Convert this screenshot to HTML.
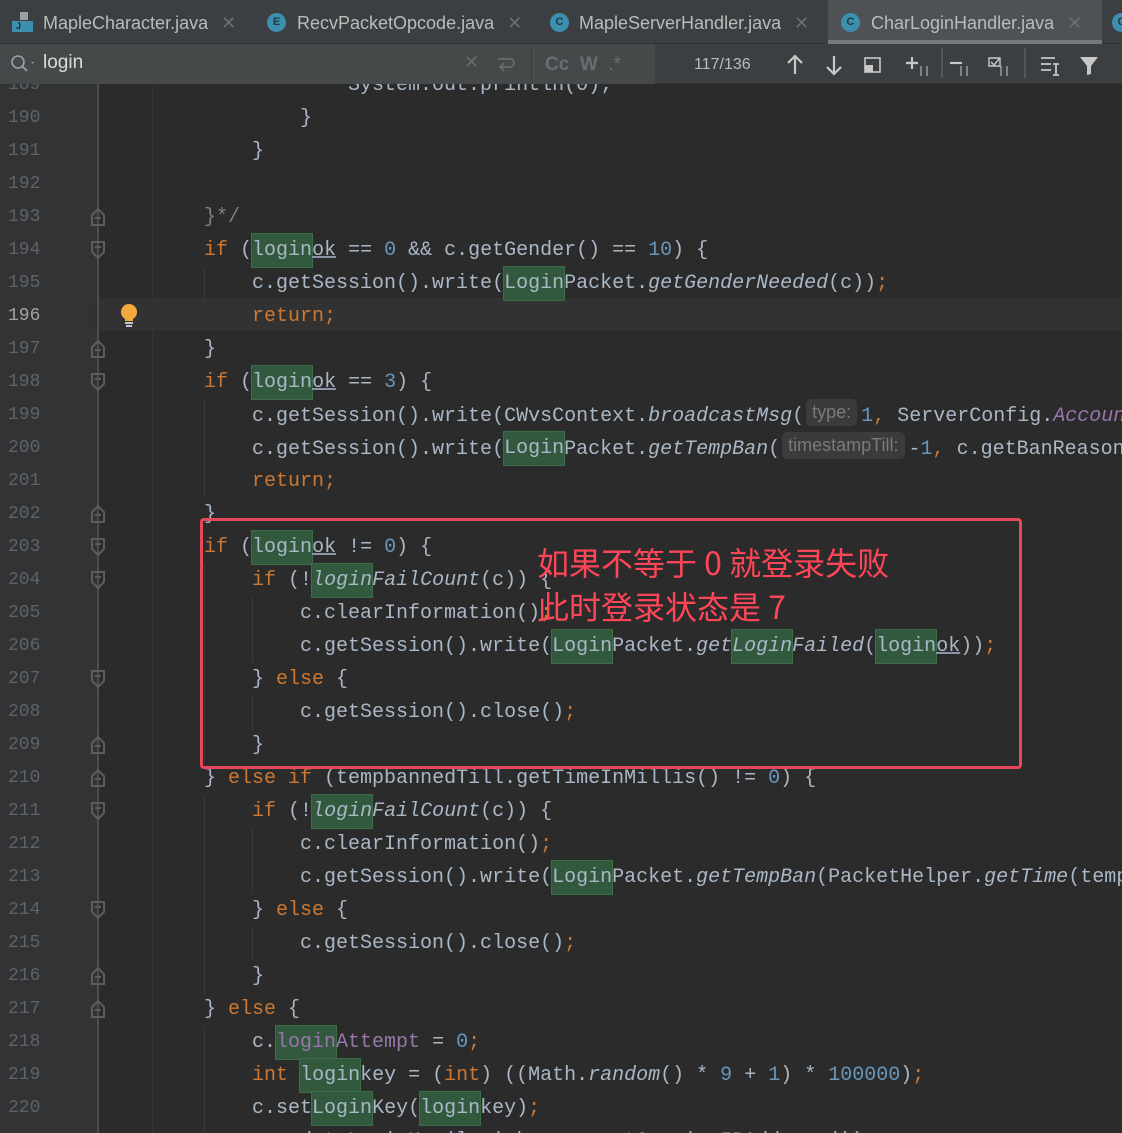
<!DOCTYPE html>
<html><head><meta charset="utf-8"><style>
*{margin:0;padding:0;box-sizing:border-box}
body{width:1122px;height:1133px;overflow:hidden;background:#2b2b2b;position:relative;font-family:"Liberation Mono",monospace}
.tabs{position:absolute;left:0;top:0;width:1122px;height:44px;background:#3c3f41;border-bottom:1px solid #323232}
.tab{position:absolute;top:0;height:44px;font:18px "Liberation Sans",sans-serif;color:#bbbbbb;line-height:46px;white-space:nowrap}
.ic{position:absolute;top:13px;width:19px;height:19px;border-radius:50%;background:#3d8fb0;color:#1f3944;font:bold 11px "Liberation Sans",sans-serif;text-align:center;line-height:19px}
.x{color:#6e6e6e;font-size:18px}
.search{position:absolute;left:0;top:44px;width:1122px;height:40px;background:#3c3f41;border-bottom:1px solid #323232}
.gut{position:absolute;left:0;top:84px;width:98px;height:1049px;background:#313335}
.vl{position:absolute;left:97px;top:84px;width:2px;height:1049px;background:#4b4d4f}
.vl2{position:absolute;left:152px;top:84px;width:1px;height:1049px;background:#333}
.ln{position:absolute;left:8px;width:50px;height:33px;line-height:33px;font-size:18px;color:#606366}
.row{position:absolute;left:108px;height:33px;line-height:33px;font-size:20px;color:#a9b7c6;white-space:pre}
.k{color:#cc7832}.n{color:#6897bb}.i{font-style:italic}.f{color:#9876aa}.c{color:#808080}
.m{background:#32593d;outline:1px solid #3b6e47;display:inline-block;height:33px;vertical-align:top}
.u{text-decoration:underline;text-decoration-color:#8a96a6}
.h{display:inline-block;background:#3b3b3b;color:#7a7a7a;font:18px "Liberation Sans",sans-serif;border-radius:5px;padding:0 6px;height:27px;line-height:27px;vertical-align:3px;margin:0 4px 0 2px}
.guide{position:absolute;width:1px;background:#3a3a3a}
.st{position:absolute;top:0;height:40px;white-space:nowrap}
</style></head><body>
<div class="tabs">
 <div class="tab" style="left:12px"><span style="position:absolute;left:0;top:12px;width:21px;height:20px"><span style="position:absolute;left:8px;top:0;width:8px;height:8px;background:#9aa0a6"></span><span style="position:absolute;left:0;top:9px;width:21px;height:11px;background:#3d8fb0;color:#1b2b33;font:bold 9px sans-serif;padding-left:4px;line-height:11px">J</span></span><span style="margin-left:31px">MapleCharacter.java</span> <span class="x" style="margin-left:8px">✕</span></div>
 <div class="tab" style="left:267px"><span class="ic" style="left:0">E</span><span style="margin-left:30px">RecvPacketOpcode.java</span> <span class="x" style="margin-left:8px">✕</span></div>
 <div class="tab" style="left:550px"><span class="ic" style="left:0">C</span><span style="margin-left:29px">MapleServerHandler.java</span> <span class="x" style="margin-left:8px">✕</span></div>
 <div class="tab" style="left:828px;width:274px;background:#4e5254"><span class="ic" style="left:13px">C</span><span style="margin-left:43px">CharLoginHandler.java</span> <span class="x" style="margin-left:8px">✕</span><div style="position:absolute;left:0;bottom:0;width:274px;height:4px;background:#747a80"></div></div>
 <div class="tab" style="left:1112px"><span class="ic" style="left:0">C</span></div>
</div>
<div class="search">
 <div style="position:absolute;left:0;top:0;width:532px;height:40px;background:#45494a"></div>
 <svg style="position:absolute;left:10px;top:10px" width="26" height="20"><circle cx="8" cy="8" r="6" fill="none" stroke="#9aa0a6" stroke-width="1.6"/><line x1="12" y1="12" x2="17" y2="17" stroke="#9aa0a6" stroke-width="1.8"/><path d="M21 8l3 0-1.5 2z" fill="#9aa0a6"/></svg>
 <div class="st" style="left:43px;font:19px 'Liberation Sans',sans-serif;line-height:38px;color:#dcdcdc">login</div>
 <div class="st" style="left:464px;color:#6b6b6b;font-size:18px;line-height:40px">✕</div>
 <svg style="position:absolute;left:496px;top:12px" width="20" height="18"><path d="M2 3h12a4 4 0 0 1 0 8H5M8 7l-4 4 4 4" fill="none" stroke="#6b6b6b" stroke-width="1.8"/></svg>
 <div style="position:absolute;left:533px;top:0;width:122px;height:40px;background:#45494a;border-left:1px solid #555"></div>
 <div class="st" style="left:545px;font:bold 19px 'Liberation Sans',sans-serif;line-height:42px;color:#6b6e70">Cc&nbsp; W&nbsp; <span style="font-weight:normal">.*</span></div>
 <div class="st" style="left:694px;font:16px 'Liberation Sans',sans-serif;line-height:42px;color:#bbbbbb">117/136</div>
 <svg style="position:absolute;left:784px;top:10px" width="330" height="22" fill="none" stroke="#c8c8c8" stroke-width="2.2">
  <path d="M11 2v18M4 9l7-7 7 7"/><path d="M50 2v18M43 13l7 7 7-7"/>
  <rect x="81" y="4" width="15" height="14" stroke-width="1.6"/><rect x="81" y="11" width="8" height="7" fill="#c8c8c8" stroke="none"/>
  <path d="M128 3v12M122 9h12"/><path d="M137 12v10M143 12v10" stroke-width="1"/>
  <path d="M166 9h12"/><path d="M177 12v10M183 12v10" stroke-width="1"/>
  <path d="M205 4h11v8h-11zM207 8l3 3 6-7" stroke-width="1.4"/><path d="M217 12v10M223 12v10" stroke-width="1"/>
  <path d="M257 4h14M257 10h10M257 16h10M272 10v11M269 10h6M269 21h6" stroke-width="1.8"/>
  <path d="M296 3h18l-7 9v8l-4 1v-9z" fill="#c8c8c8" stroke="none"/>
 </svg>
 <div style="position:absolute;left:941px;top:4px;width:2px;height:30px;background:#555"></div>
 <div style="position:absolute;left:1024px;top:4px;width:2px;height:30px;background:#555"></div>
</div>
<div class="gut"></div>
<div style="position:absolute;left:92px;top:298px;width:1030px;height:33px;background:#323232"></div>
<div class="vl"></div><div class="vl2"></div>
<div style="position:absolute;left:0;top:84px;width:1122px;height:1049px;overflow:hidden">
<div style="position:absolute;left:0;top:-82px;width:1122px;height:1133px">
<div class="guide" style="left:204px;top:265px;height:33px"></div>
<div class="guide" style="left:204px;top:397px;height:99px"></div>
<div class="guide" style="left:204px;top:562px;height:198px"></div>
<div class="guide" style="left:252px;top:595px;height:66px"></div>
<div class="guide" style="left:252px;top:694px;height:33px"></div>
<div class="guide" style="left:204px;top:793px;height:198px"></div>
<div class="guide" style="left:252px;top:826px;height:66px"></div>
<div class="guide" style="left:252px;top:925px;height:33px"></div>
<div class="guide" style="left:204px;top:1024px;height:109px"></div>

<div class="ln" style="top:67px">189</div><div class="row" style="top:67px">                    System.out.println(0);</div>
<div class="ln" style="top:100px">190</div><div class="row" style="top:100px">                }</div>
<div class="ln" style="top:133px">191</div><div class="row" style="top:133px">            }</div>
<div class="ln" style="top:166px">192</div>
<div class="ln" style="top:199px">193</div><div class="row" style="top:199px">        <span class="c">}*/</span></div>
<div class="ln" style="top:232px">194</div><div class="row" style="top:232px">        <span class="k">if</span> (<span class="u"><span class="m">login</span>ok</span> == <span class="n">0</span> &amp;&amp; c.getGender() == <span class="n">10</span>) {</div>
<div class="ln" style="top:265px">195</div><div class="row" style="top:265px">            c.getSession().write(<span class="m">Login</span>Packet.<span class="i">getGenderNeeded</span>(c))<span class="k">;</span></div>
<div class="ln" style="top:298px;color:#a4a3a3">196</div><div class="row" style="top:298px">            <span class="k">return;</span></div>
<div class="ln" style="top:331px">197</div><div class="row" style="top:331px">        }</div>
<div class="ln" style="top:364px">198</div><div class="row" style="top:364px">        <span class="k">if</span> (<span class="u"><span class="m">login</span>ok</span> == <span class="n">3</span>) {</div>
<div class="ln" style="top:397px">199</div><div class="row" style="top:397px">            c.getSession().write(CWvsContext.<span class="i">broadcastMsg</span>(<span class="h">type:</span><span class="n">1</span><span class="k">,</span> ServerConfig.<span class="f i">AccountLimit</span></div>
<div class="ln" style="top:430px">200</div><div class="row" style="top:430px">            c.getSession().write(<span class="m">Login</span>Packet.<span class="i">getTempBan</span>(<span class="h">timestampTill:</span>-<span class="n">1</span><span class="k">,</span> c.getBanReason</div>
<div class="ln" style="top:463px">201</div><div class="row" style="top:463px">            <span class="k">return;</span></div>
<div class="ln" style="top:496px">202</div><div class="row" style="top:496px">        }</div>
<div class="ln" style="top:529px">203</div><div class="row" style="top:529px">        <span class="k">if</span> (<span class="u"><span class="m">login</span>ok</span> != <span class="n">0</span>) {</div>
<div class="ln" style="top:562px">204</div><div class="row" style="top:562px">            <span class="k">if</span> (!<span class="i"><span class="m">login</span>FailCount</span>(c)) {</div>
<div class="ln" style="top:595px">205</div><div class="row" style="top:595px">                c.clearInformation()<span class="k">;</span></div>
<div class="ln" style="top:628px">206</div><div class="row" style="top:628px">                c.getSession().write(<span class="m">Login</span>Packet.<span class="i">get<span class="m">Login</span>Failed</span>(<span class="u"><span class="m">login</span>ok</span>))<span class="k">;</span></div>
<div class="ln" style="top:661px">207</div><div class="row" style="top:661px">            } <span class="k">else</span> {</div>
<div class="ln" style="top:694px">208</div><div class="row" style="top:694px">                c.getSession().close()<span class="k">;</span></div>
<div class="ln" style="top:727px">209</div><div class="row" style="top:727px">            }</div>
<div class="ln" style="top:760px">210</div><div class="row" style="top:760px">        } <span class="k">else if</span> (tempbannedTill.getTimeInMillis() != <span class="n">0</span>) {</div>
<div class="ln" style="top:793px">211</div><div class="row" style="top:793px">            <span class="k">if</span> (!<span class="i"><span class="m">login</span>FailCount</span>(c)) {</div>
<div class="ln" style="top:826px">212</div><div class="row" style="top:826px">                c.clearInformation()<span class="k">;</span></div>
<div class="ln" style="top:859px">213</div><div class="row" style="top:859px">                c.getSession().write(<span class="m">Login</span>Packet.<span class="i">getTempBan</span>(PacketHelper.<span class="i">getTime</span>(tempbannedTill</div>
<div class="ln" style="top:892px">214</div><div class="row" style="top:892px">            } <span class="k">else</span> {</div>
<div class="ln" style="top:925px">215</div><div class="row" style="top:925px">                c.getSession().close()<span class="k">;</span></div>
<div class="ln" style="top:958px">216</div><div class="row" style="top:958px">            }</div>
<div class="ln" style="top:991px">217</div><div class="row" style="top:991px">        } <span class="k">else</span> {</div>
<div class="ln" style="top:1024px">218</div><div class="row" style="top:1024px">            c.<span class="f"><span class="m">login</span>Attempt</span> = <span class="n">0</span><span class="k">;</span></div>
<div class="ln" style="top:1057px">219</div><div class="row" style="top:1057px">            <span class="k">int</span> <span class="m">login</span>key = (<span class="k">int</span>) ((Math.<span class="i">random</span>() * <span class="n">9</span> + <span class="n">1</span>) * <span class="n">100000</span>)<span class="k">;</span></div>
<div class="ln" style="top:1090px">220</div><div class="row" style="top:1090px">            c.set<span class="m">Login</span>Key(<span class="m">login</span>key)<span class="k">;</span></div>
<div class="ln" style="top:1123px">221</div><div class="row" style="top:1123px">            c.updateLoginKey(loginkey, c.getSessionIPAddress());</div>
</div></div>

<svg style="position:absolute;left:0;top:0;pointer-events:none" width="1122" height="1133" fill="none" stroke="#5a5c5e" stroke-width="2">
 <path d="M92 215l6-6 6 6v10h-12zM95 218h6"/>
 <path d="M92 347l6-6 6 6v10h-12zM95 350h6"/>
 <path d="M92 512l6-6 6 6v10h-12zM95 515h6"/>
 <path d="M92 743l6-6 6 6v10h-12zM95 746h6"/>
 <path d="M92 776l6-6 6 6v10h-12zM95 779h6"/>
 <path d="M92 974l6-6 6 6v10h-12zM95 977h6"/>
 <path d="M92 1007l6-6 6 6v10h-12zM95 1010h6"/>
 <path d="M92 242h12v10l-6 6-6-6zM95 247h6"/>
 <path d="M92 374h12v10l-6 6-6-6zM95 379h6"/>
 <path d="M92 539h12v10l-6 6-6-6zM95 544h6"/>
 <path d="M92 572h12v10l-6 6-6-6zM95 577h6"/>
 <path d="M92 671h12v10l-6 6-6-6zM95 676h6"/>
 <path d="M92 803h12v10l-6 6-6-6zM95 808h6"/>
 <path d="M92 902h12v10l-6 6-6-6zM95 907h6"/>
</svg>
<svg style="position:absolute;left:119px;top:303px" width="20" height="26"><circle cx="10" cy="9" r="8" fill="#f2a93b"/><rect x="6" y="15" width="8" height="3" fill="#f2a93b"/><rect x="6" y="19" width="8" height="2" fill="#c8c8c8"/><rect x="7" y="22" width="6" height="2" fill="#c8c8c8"/></svg>

<div style="position:absolute;left:200px;top:518px;width:822px;height:251px;border:3px solid #e8485a;border-radius:4px"></div>
<div style="position:absolute;left:537px;top:540px;font:32px 'Noto Sans CJK SC',sans-serif;line-height:44px;color:#ff4558;white-space:nowrap">如果不等于 0 就登录失败<br>此时登录状态是 7</div>
</body></html>
